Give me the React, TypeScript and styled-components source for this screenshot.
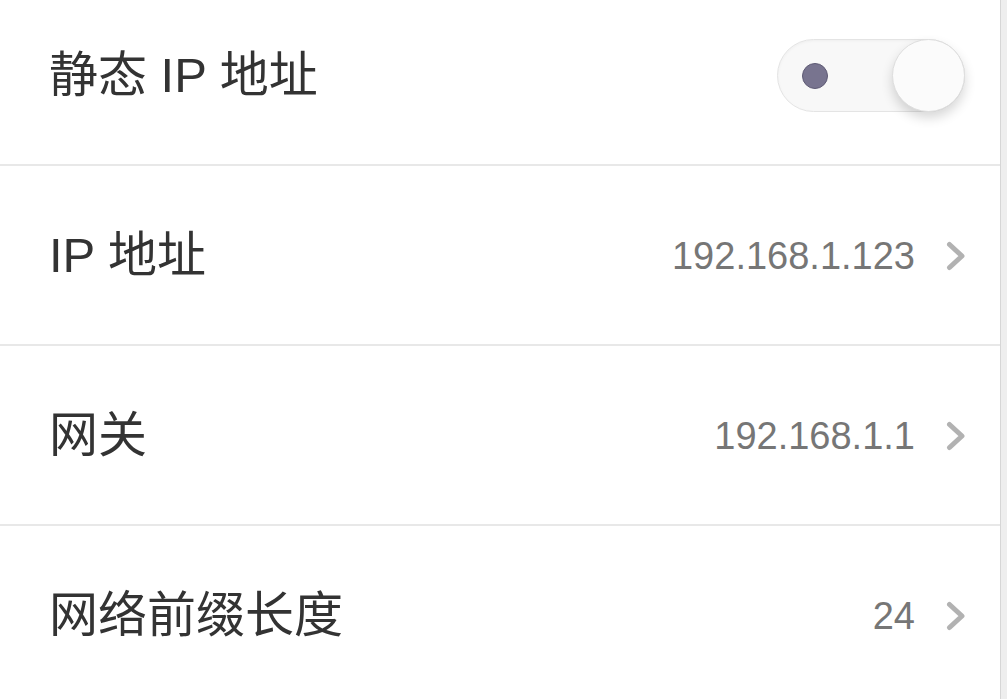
import styled, { createGlobalStyle } from "styled-components"

const GlobalStyle = createGlobalStyle`
  html, body {
    margin: 0;
    padding: 0;
    background: #ffffff;
  }
  body {
    font-family: "Liberation Sans", "Noto Sans CJK SC", sans-serif;
    overflow: hidden;
  }
`

interface RowData {
  label: string
  value: string
}

const rows: RowData[] = [
  { label: "IP 地址", value: "192.168.1.123" },
  { label: "网关", value: "192.168.1.1" },
  { label: "网络前缀长度", value: "24" },
]

function Chevron() {
  return (
    <ChevronIcon width="20" height="30" viewBox="0 0 20 30">
      <polyline points="3.5,3.5 16,15 3.5,26.5" fill="none" stroke="#b2b2b2" strokeWidth="5" strokeLinecap="round" strokeLinejoin="round" />
    </ChevronIcon>
  )
}

export default function App() {
  return (
    <Page>
      <GlobalStyle />
      <List>
        <Row>
          <Label>静态 IP 地址</Label>
          <Toggle>
            <Dot />
            <Knob />
          </Toggle>
        </Row>
        {rows.map((r, i) => (
          <Row key={i}>
            <Label>{r.label}</Label>
            <Right>
              <Value>{r.value}</Value>
              <Chevron />
            </Right>
          </Row>
        ))}
      </List>
      <Edge />
    </Page>
  )
}

const Page = styled.div`
  width: 1007px;
  height: 699px;
  display: flex;
  overflow: hidden;
  background: #fff;
`

const List = styled.div`
  flex: 1;
  display: flex;
  flex-direction: column;
  /* scrolled a bit, first row is cut at top */
  margin-top: -14px;
`

const Row = styled.div`
  height: 178px;
  flex-shrink: 0;
  display: flex;
  align-items: center;
  justify-content: space-between;
  padding: 0 34px 0 49px;
  border-bottom: 2px solid #e8e8e8;
  &:last-child {
    border-bottom: none;
  }
`

const Label = styled.div`
  font-size: 49px;
  line-height: 1.2;
  color: #333333;
  margin-top: 1px;
`

const Right = styled.div`
  display: flex;
  align-items: center;
  gap: 31px;
  margin-top: 2px;
`

const Value = styled.div`
  font-size: 38px;
  color: #767676;
`

const ChevronIcon = styled.svg`
  display: block;
`

const Toggle = styled.div`
  width: 188px;
  height: 73px;
  box-sizing: border-box;
  border-radius: 37px;
  background: #f8f8f8;
  border: 1px solid #e4e4e4;
  box-shadow: inset 0 1px 3px rgba(0, 0, 0, 0.04);
  display: flex;
  align-items: center;
  justify-content: space-between;
  padding-left: 24px;
  margin-right: 1px;
  margin-top: 1px;
`

const Dot = styled.div`
  width: 26px;
  height: 26px;
  border-radius: 50%;
  background: #78748f;
  border: 1px solid #5e5a74;
  box-sizing: border-box;
`

const Knob = styled.div`
  width: 73px;
  height: 73px;
  box-sizing: border-box;
  border-radius: 50%;
  background: #fbfbfb;
  border: 1px solid #dedede;
  box-shadow: 0 6px 12px rgba(0, 0, 0, 0.16);
  margin-right: -1px;
`

const Edge = styled.div`
  width: 6px;
  flex-shrink: 0;
  background: #eeeeee;
  border-left: 1px solid #d6d6d6;
`
